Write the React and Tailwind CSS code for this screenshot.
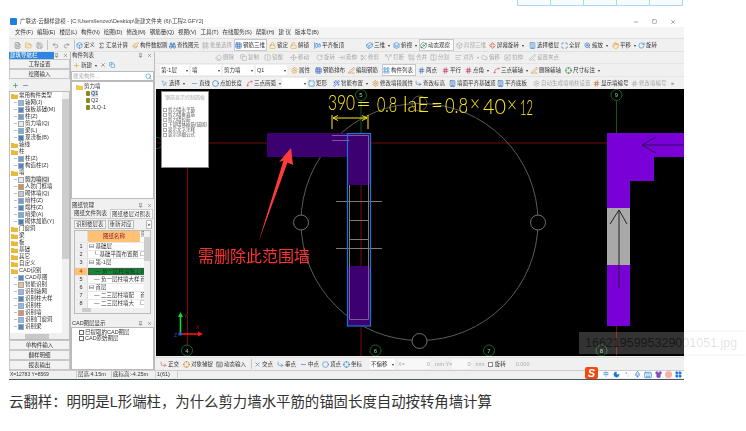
import React from "react";
import {
  Box, Sigma, Paintbrush, Binoculars, LayoutGrid, Grid3x3, Lock, Unlock, AlignHorizontalJustifyStart, Eraser, Copy, FlipHorizontal,
  Move, RotateCw, ArrowRightToLine, Scissors, Split, Combine, Columns2, AlignLeft, Cloud, Scaling, PenLine, Layers, Cuboid, Orbit,
  Rotate3d, Building, Maximize, ZoomIn, Hand, MousePointer, Minus, Circle, Spline, Square, Wand2, Settings, Hash, Crosshair, CornerDownRight,
  Search, Plus, X, FileText, FolderOpen, Save, Undo2, Redo2, Mic, Keyboard, Shirt, Moon, LayoutGrid as Grid4, Pin
} from "lucide-react";

const Tool = ({ w, I, c, t, gray, box, arrow }) => (
  <div className={`flex items-center gap-[1px] shrink-0 h-full whitespace-nowrap ${w} ${box ? "bg-white border border-[#c8c8c8]" : ""} ${gray ? "text-[#a8a8a8]" : "text-[#333]"}`}>
    {I && <I size={7} strokeWidth={2} className={`shrink-0 ${gray ? "text-[#aaa]" : c}`} />}
    <span>{t}</span>
    {arrow && <span className="ml-[2px] text-[4px]">▾</span>}
  </div>
);

const Sep = () => <div className="w-[1px] h-[10px] bg-[#c4c4c4] shrink-0" />;

const Select = ({ w, t }) => (
  <div className={`flex items-center justify-between bg-white h-[10px] shrink-0 px-[1px] ${w}`}>
    <span>{t}</span>
    <span className="text-[4px]">▾</span>
  </div>
);

const Folder = ({ open }) => (
  <svg width="7" height="6" viewBox="0 0 7 6" className="shrink-0">
    <path d="M0 1h2.5l.7.8H7V6H0z" fill={open ? "#f3c64f" : "#e8b93a"} />
  </svg>
);

const Leaf = ({ c }) => <span className={`w-[6px] h-[6px] shrink-0 border border-[#a0a8b0] ${c}`} />;

const treeRows = [
  ["f", "常用构件类型", 0], ["l", "轴网(J)", 1, "bg-[#8fb8e8]"], ["l", "筏板基础(M)", 1, "bg-[#4f87c8]"], ["l", "柱(Z)", 1, "bg-[#6d9ed8]"],
  ["l", "剪力墙(Q)", 1, "bg-[#e8e8e8]"], ["l", "梁(L)", 1, "bg-[#6db0e0]"], ["l", "现浇板(B)", 1, "bg-[#3f7fc8]"],
  ["f", "轴线", 0], ["f", "柱", 0], ["l", "柱(Z)", 1, "bg-[#6d9ed8]"], ["l", "构造柱(Z)", 1, "bg-[#4f87c8]"],
  ["f", "墙", 0], ["l", "剪力墙(Q)", 1, "bg-[#e8e8e8]", true], ["l", "人防门框墙", 1, "bg-[#d89040]"], ["l", "砌体墙(Q)", 1, "bg-[#c8c8c8]"],
  ["l", "暗柱(Z)", 1, "bg-[#6d9ed8]"], ["l", "端柱(Z)", 1, "bg-[#4f87c8]"], ["l", "暗梁(A)", 1, "bg-[#6db0e0]"], ["l", "砌体加筋(Y)", 1, "bg-[#3f7fc8]"],
  ["f", "门窗洞", 0], ["f", "梁", 0], ["f", "板", 0], ["f", "基础", 0], ["f", "其它", 0], ["f", "自定义", 0], ["f", "CAD识别", 0],
  ["l", "CAD草图", 1, "bg-[#4f87c8]"], ["l", "智能识别", 1, "bg-[#f0c080]"], ["l", "识别轴网", 1, "bg-[#8fb8e8]"], ["l", "识别柱大样", 1, "bg-[#4f87c8]"],
  ["l", "识别柱", 1, "bg-[#8fb8e8]"], ["l", "识别墙", 1, "bg-[#e09060]"], ["l", "识别门窗洞", 1, "bg-[#8fb8e8]"], ["l", "识别梁", 1, "bg-[#4f87c8]"],
];

const PanelHead = ({ t, blue }) => (
  <div className="flex items-center h-[7px] shrink-0 bg-[#f0f0f0]">
    <div className={`flex items-center h-full px-[1px] ${blue ? "bg-[#2f86e0] text-white w-[51px]" : "flex-1 text-[#333]"}`}>{t}</div>
    <div className={`flex items-center justify-end gap-[4px] pr-[2px] text-[#555] ${blue ? "flex-1" : "w-[24px]"}`}>
      <Pin size={5} />
      <X size={5} />
    </div>
  </div>
);

const SideBtn = ({ t }) => (
  <div className="h-[10px] shrink-0 flex items-center justify-center bg-[#f2f2f2] border border-[#c8c8c8] text-[#333]">{t}</div>
);

const tableRows = [
  ["1", "⊟ 基础层", "", 0, false],
  ["2", "└ 基础平面布置图", "☐", 1, false],
  ["3", "⊟ 第-1层", "", 0, false],
  ["4", "— 负一层柱墙施工", "首", 1, true],
  ["5", "— 负一层柱墙大样", "首", 1, false],
  ["6", "⊟ 首层", "", 0, false],
  ["7", "— 二三层柱墙配", "首", 1, false],
  ["8", "— 二三层柱墙大", "☐", 1, false],
];

const Canvas = () => (
  <div className="relative h-[267px] bg-black ml-[1px] overflow-hidden shrink-0">
    <svg viewBox="156 89 528 267" width="528" height="267" className="absolute left-0 top-0">
      <g fill="none" strokeWidth="1">
        <path d="M157 143H607" stroke="#7a0808" />
        <path d="M187.5 168V356" stroke="#7a0808" />
        <path d="M361 185V356" stroke="#7a0808" />
        <path d="M616.5 326V356" stroke="#7a0808" />
        <path d="M361 100V133M616.5 100V133M187 345V356M375.5 345V356M489 345V356M601.5 345V356" stroke="#0c5a1c" />
        <circle cx="419.5" cy="222" r="118.5" stroke="#5c5c5c" />
        <circle cx="301" cy="222.5" r="7.5" stroke="#707070" fill="#000" />
        <circle cx="538" cy="222.5" r="7.5" stroke="#707070" fill="#000" />
        <circle cx="419.5" cy="341" r="7.5" stroke="#707070" fill="#000" />
        <circle cx="419.5" cy="103.5" r="7.5" stroke="#555" />
        <circle cx="157" cy="143" r="5.5" stroke="#0c5a1c" />
        {[[361, 95], [616.5, 95], [187, 350.5], [375.5, 350.5], [489, 350.5], [601.5, 350.5]].map(([x, y]) => (
          <circle key={x} cx={x} cy={y} r="5.5" stroke="#0f6a22" fill="#000" />
        ))}
      </g>
      <g fontFamily="Liberation Sans, sans-serif" fontSize="6" fill="#bbb" textAnchor="middle">
        <text x="361" y="97">5</text>
        <text x="616.5" y="97">9</text>
        <text x="187" y="353">4</text>
        <text x="375.5" y="353">6</text>
        <text x="489" y="353">7</text>
        <text x="601.5" y="353">8</text>
      </g>
      <path d="M267 133H370V185H348V157H267Z" fill="#3d0070" />
      <rect x="348" y="266" width="22" height="60" fill="#3d0070" />
      <g fill="none" stroke="#7a7a7a" strokeWidth="1">
        <path d="M349.5 185V266M368.5 185V266" />
        <path d="M336 201.5H382M350 220.5H368M350 239.5H368M336 248.5H382" />
      </g>
      <g fill="none" stroke="#7b5a9c" strokeWidth="1">
        <path d="M332 135.5H368.5V185M332 140.5H349.5" />
        <path d="M349.5 266V319.5H368.5V266" />
      </g>
      <rect x="347.5" y="133.5" width="23" height="192.5" fill="none" stroke="#1b72d8" strokeWidth="1.2" />
      <path d="M607 133H684V157H654V181H630V208H607Z" fill="#7a00d8" />
      <rect x="607" y="208" width="23" height="57" fill="#a9a9a9" />
      <rect x="607" y="265" width="23" height="61" fill="#7a00d8" />
      <g fill="none" stroke="#222" strokeWidth="1">
        <path d="M619 288V210M610 224L619 210L627 224" />
        <path d="M684 145H642M656 137L642 145L656 153" stroke="#30105a" />
      </g>
      <path d="M291 148L293 165L287.5 162.5L258.5 242L283.5 160.5L279 162Z" fill="#ff3b3b" />
      <g fill="none" stroke="#ffe81a" strokeWidth="1">
        <path d="M332 115V129M368 115V129M333 118H367M333 118L338 115.5M333 118L338 120.5M367 118L362 115.5M367 118L362 120.5" />
      </g>
      <g fontFamily="Lato, Open Sans, sans-serif" fontWeight="300" fontSize="21" fill="#ffe81a">
        <text x="328" y="110" textLength="27" lengthAdjust="spacingAndGlyphs">390</text>
        <text x="356" y="111" textLength="15" lengthAdjust="spacingAndGlyphs">=</text>
        <text x="377" y="112" textLength="20" lengthAdjust="spacingAndGlyphs">0.8</text>
        <text x="403" y="112" textLength="26" lengthAdjust="spacingAndGlyphs">laE</text>
        <text x="431" y="112" textLength="12" lengthAdjust="spacingAndGlyphs">=</text>
        <text x="445" y="113" textLength="23" lengthAdjust="spacingAndGlyphs">0.8</text>
        <text x="470" y="111" textLength="10" lengthAdjust="spacingAndGlyphs">×</text>
        <text x="483" y="114" textLength="23" lengthAdjust="spacingAndGlyphs">40</text>
        <text x="507" y="112" textLength="10" lengthAdjust="spacingAndGlyphs">×</text>
        <text x="520" y="115" textLength="13" lengthAdjust="spacingAndGlyphs">12</text>
      </g>
      <g strokeWidth="1.6" fill="none">
        <path d="M180.5 334V315" stroke="#14d838" />
        <path d="M180 334H200" stroke="#ff1414" />
      </g>
      <path d="M178 317L180.5 312L183 317Z" fill="#14d838" />
      <path d="M198 331.5L203 334L198 336.5Z" fill="#ff1414" />
      <rect x="178.5" y="332.5" width="3" height="3" fill="#1c5ce8" />
      <g fontFamily="Liberation Sans, sans-serif" fontSize="5">
        <text x="184" y="318" fill="#0c7a20">Y</text>
        <text x="196" y="329" fill="#a01010">X</text>
        <text x="174" y="337" fill="#2050c0">Z</text>
      </g>
    </svg>
    <div className="absolute left-[5px] top-[2px] w-[48px] h-[77px] bg-white border border-[#888] flex flex-col text-[#555] text-[4.5px] leading-[5px]">
      <div className="text-center mt-[3px] text-[5px] text-[#aaa] whitespace-nowrap">钢筋显示控制面板</div>
      <div className="mt-[7px] ml-[1px] flex flex-col whitespace-nowrap">
        {["剪力墙水平筋", "剪力墙垂直筋", "剪力墙拉筋", "下部墙体插筋(锚固)", "显示文字注释", "显示详细公式"].map((t) => (
          <div key={t} className="flex items-center gap-[1px] h-[5px]">
            <span className="w-[4px] h-[4px] border border-[#aaa] shrink-0" />
            <span>{t}</span>
          </div>
        ))}
      </div>
    </div>
    <div className="absolute left-[42px] top-[157px] text-[16px] leading-[18px] text-[#ff3232] whitespace-nowrap font-['Noto_Sans_CJK_SC',sans-serif]">需删除此范围墙</div>
  </div>
);

export default function App() {
  return (
    <div className="relative w-[746px] h-[431px] bg-white overflow-hidden font-['Liberation_Sans','Noto_Sans_CJK_SC',sans-serif]">
      <div className="flex justify-end pr-[63px] h-[16px] items-start">
        <div className="grid grid-cols-5 w-[166px] h-[6px] bg-[#f8fcff] border-b border-[#a8d8f6] border-l">
          {[0, 1, 2, 3, 4].map((i) => <div key={i} className="border-r border-[#a8d8f6]" />)}
        </div>
      </div>

      <div className="ml-[9px] w-[675px] h-[364px] flex flex-col text-[5.5px] leading-[7px] text-[#333] bg-[#f0f0f0] border-b border-[#4a5560] blur-[0.45px]">
        <div className="h-[11px] bg-white flex items-center shrink-0">
          <div className="w-[7px] h-[7px] ml-[1px] mr-[3px] rounded-[1px] bg-[#1e7fe0] shrink-0" />
          <span className="flex-1 whitespace-nowrap text-[#444]">广联达-云翻样建模 - [C:\Users\lenovo\Desktop\新建文件夹 (6)\工程2.GFY2]</span>
          <div className="flex items-center gap-[13px] pr-[8px] text-[#555]">
            <Minus size={6} />
            <Square size={5} />
            <X size={6} />
          </div>
        </div>

        <div className="h-[11px] bg-[#f5f5f5] flex items-center gap-[4px] pl-[6px] shrink-0 whitespace-nowrap">
          {["文件(F)", "编辑(E)", "楼层(L)", "构件(N)", "绘图(D)", "修改(M)", "钢筋量(Q)", "视图(V)", "工具(T)", "在线服务(S)", "帮助(H)", "建 议", "版本号(B)"].map((m) => <span key={m}>{m}</span>)}
        </div>

        <div className="h-[14px] flex items-center pl-[5px] shrink-0 border-t border-b border-[#e0e0e0]">
          <div className="flex items-center gap-[4px] w-[62px] shrink-0 text-[#777]">
            <FileText size={7} className="text-[#777]" />
            <FolderOpen size={7} className="text-[#e0a030]" />
            <Save size={7} className="text-[#888]" />
            <Sep />
            <Undo2 size={7} />
            <Redo2 size={7} />
            <Sep />
          </div>
          <Tool w="w-[22px]" I={Box} c="text-[#2a7fd0]" t="定义" />
          <Tool w="w-[34px]" I={Sigma} c="text-[#333]" t="汇总计算" />
          <Tool w="w-[37px]" I={Paintbrush} c="text-[#d8a030]" t="构件数据刷" />
          <Tool w="w-[33px]" I={Binoculars} c="text-[#2060b0]" t="查找图元" />
          <Tool w="w-[32px]" I={LayoutGrid} c="text-[#aaa]" t="批量选择" gray />
          <Tool w="w-[33px]" I={Grid3x3} c="text-[#2a60c0]" t="钢筋三维" box />
          <Tool w="w-[21px] pl-[2px]" I={Lock} c="text-[#e0a020]" t="锁定" />
          <Tool w="w-[24px] pl-[2px]" I={Unlock} c="text-[#e0a020]" t="解锁" />
          <Tool w="w-[45px] pl-[2px]" I={AlignHorizontalJustifyStart} c="text-[#2a7fd0]" t="平齐板顶" />
          <Tool w="w-[27px] ml-[9px]" I={Cuboid} c="text-[#2a7fd0]" t="三维" arrow />
          <Tool w="w-[26px]" I={Layers} c="text-[#2a7fd0]" t="俯视" arrow />
          <Tool w="w-[35px]" I={Orbit} c="text-[#208040]" t="动态观察" box />
          <Tool w="w-[35px] pl-[2px]" I={Box} c="text-[#aaa]" t="局部三维" gray />
          <Tool w="w-[40px]" I={Rotate3d} c="text-[#d06040]" t="屏幕旋转" arrow />
          <Tool w="w-[32px]" I={Building} c="text-[#2a7fd0]" t="选择楼层" />
          <Tool w="w-[23px]" I={Maximize} c="text-[#2060b0]" t="全屏" />
          <Tool w="w-[28px]" I={ZoomIn} c="text-[#2060b0]" t="缩放" arrow />
          <Tool w="w-[26px]" I={Hand} c="text-[#e0a020]" t="平移" arrow />
          <Tool w="w-[20px]" I={RotateCw} c="text-[#2a7fd0]" t="旋转" />
        </div>

        <div className="flex h-[318px] shrink-0">
          <div className="w-[62px] flex flex-col shrink-0 border-r border-[#bbb]">
            <PanelHead t="建筑导航栏" blue />
            <SideBtn t="工程设置" />
            <SideBtn t="绘图输入" />
            <div className="h-[12px] flex items-center gap-[3px] pl-[3px] shrink-0">
              <Plus size={7} className="text-[#2a8050]" />
              <Minus size={7} className="text-[#2060b0]" />
            </div>
            <div className="h-[249px] bg-white border border-[#bbb] flex shrink-0 overflow-hidden">
              <div className="flex-1 min-w-0 flex flex-col">
                <div className="flex-1 pl-[1px] overflow-hidden">
                  {treeRows.map(([k, t, lvl, c, sel], i) => (
                    <div key={i} className={`h-[7px] flex items-center gap-[1px] whitespace-nowrap ${lvl ? "pl-[3px]" : ""}`}>
                      {lvl ? <span className="w-[3px] h-[1px] bg-[#c0c0c0] shrink-0" /> : null}
                      {k === "f" ? <Folder /> : <Leaf c={c} />}
                      <span className={sel ? "bg-[#e0e0e0]" : ""}>{t}</span>
                    </div>
                  ))}
                </div>
                <div className="h-[6px] bg-[#f0f0f0] flex items-center shrink-0">
                  <div className="ml-[15px] w-[24px] h-[5px] bg-[#c8c8c8]" />
                </div>
              </div>
              <div className="w-[7px] bg-[#f0f0f0] shrink-0 flex flex-col">
                <div className="mt-[7px] h-[160px] bg-[#cdcdcd]" />
              </div>
            </div>
            <SideBtn t="单构件输入" />
            <SideBtn t="翻样明细" />
            <SideBtn t="报表输出" />
          </div>

          <div className="w-[84px] flex flex-col shrink-0 border-r border-[#bbb]">
            <PanelHead t="构件列表" />
            <div className="h-[12px] flex items-center gap-[3px] pl-[2px] shrink-0">
              <Tool I={Plus} c="text-[#e0a020]" t="新建" arrow />
              <X size={6} className="text-[#555]" />
              <Copy size={6} className="text-[#2a7fd0]" />
            </div>
            <div className="h-[10px] flex items-center bg-white border border-[#bbb] shrink-0 text-[#aaa] pl-[1px]">
              <span className="flex-1">搜索构件...</span>
              <Search size={7} className="text-[#2a7fd0] mr-[1px]" />
            </div>
            <div className="h-[118px] bg-white border border-[#bbb] shrink-0 pt-[1px] pl-[4px] flex flex-col">
              <div className="h-[7px] flex items-center gap-[1px]"><Folder open /><span>剪力墙</span></div>
              {[["Q1", true], ["Q2", false], ["JLQ-1", false]].map(([t, s]) => (
                <div key={t} className="h-[7px] flex items-center gap-[1px] pl-[10px]">
                  <span className="w-[4px] h-[5px] bg-[#8a8a20] rounded-[1px] shrink-0" />
                  <span className={s ? "bg-[#cfe0f4]" : ""}>{t}</span>
                </div>
              ))}
            </div>
            <div className="h-[3px] shrink-0" />
            <PanelHead t="图纸管理" />
            <div className="h-[10px] flex items-end gap-[3px] pl-[3px] shrink-0 border-b border-[#ccc]">
              <span className="pb-[1px]">图纸文件列表</span>
              <span className="h-[9px] bg-white border border-[#ccc] border-b-0 px-[1px] flex items-center whitespace-nowrap">图纸楼层对照表</span>
            </div>
            <div className="h-[11px] flex items-center gap-[2px] pl-[3px] shrink-0 whitespace-nowrap">
              <span className="border border-[#bbb] px-[1px] h-[9px] flex items-center bg-[#f8f8f8]">识别楼层表</span>
              <span className="border border-[#bbb] px-[1px] h-[9px] flex items-center bg-[#f8f8f8]">重新对应</span>
              <span className="ml-auto mr-[2px] border border-[#bbb] w-[6px] h-[9px] flex items-center justify-center bg-white">»</span>
            </div>
            <div className="h-[84px] mx-[3px] bg-white border border-[#bbb] flex shrink-0 overflow-hidden">
              <div className="flex-1 min-w-0 flex flex-col">
                <div className="flex h-[11px] shrink-0">
                  <div className="w-[13px] bg-[#f0f0f0] border-r border-[#ddd]" />
                  <div className="w-[52px] bg-[#ffc174] text-[#8a1a30] flex items-center justify-center">图纸名称</div>
                  <div className="flex-1 text-[#666] pl-[1px] overflow-hidden">图</div>
                </div>
                {tableRows.map(([n, t, e, lvl, sel]) => (
                  <div key={n} className="flex h-[8.2px] shrink-0 border-t border-[#e8e8e8] whitespace-nowrap">
                    <div className={`w-[13px] flex items-center justify-center border-r border-[#ddd] ${sel ? "bg-[#ffc174] text-[#a03010]" : "bg-[#f0f0f0]"}`}>{n}</div>
                    <div className={`w-[52px] flex items-center overflow-hidden ${lvl ? "pl-[6px]" : "pl-[1px]"} ${sel ? "bg-[#0c8a34] text-[#07320f] border border-[#555]" : ""}`}>{t}</div>
                    <div className={`flex-1 overflow-hidden ${sel ? "bg-[#0c8a34]" : ""}`}>{e}</div>
                  </div>
                ))}
                <div className="flex-1 bg-[#f0f0f0] flex items-center">
                  <div className="ml-[7px] w-[9px] h-[4px] bg-[#cdcdcd]" />
                </div>
              </div>
              <div className="w-[6px] bg-[#f0f0f0] shrink-0">
                <div className="mt-[6px] h-[24px] bg-[#cdcdcd]" />
              </div>
            </div>
            <div className="h-[6px] shrink-0" />
            <PanelHead t="CAD图层显示" />
            <div className="flex-1 bg-white border border-[#bbb] pl-[7px] pt-[1px]">
              {["已提取的CAD图层", "CAD原始图层"].map((t) => (
                <div key={t} className="h-[6.5px] flex items-center gap-[1px] whitespace-nowrap">
                  <span className="w-[5px] h-[5px] border border-[#666] shrink-0" />
                  <span>{t}</span>
                </div>
              ))}
            </div>
          </div>

          <div className="flex-1 min-w-0 flex flex-col">
            <div className="h-[11px] flex items-center pl-[60px] shrink-0">
              <Tool w="w-[25px]" I={Eraser} t="删除" gray />
              <Tool w="w-[24px]" I={Copy} t="复制" gray />
              <Tool w="w-[26px]" I={FlipHorizontal} t="镜像" gray />
              <Tool w="w-[26px]" I={Move} t="移动" gray />
              <Tool w="w-[22px]" I={RotateCw} t="旋转" gray />
              <Tool w="w-[22px]" I={ArrowRightToLine} t="延伸" gray />
              <Tool w="w-[25px]" I={Scissors} t="修剪" gray />
              <Tool w="w-[23px]" I={Split} t="打断" gray />
              <Tool w="w-[22px]" I={Combine} t="合并" gray />
              <Tool w="w-[25px]" I={Columns2} t="分割" gray />
              <Tool w="w-[26px]" I={AlignLeft} t="对齐" gray arrow />
              <Tool w="w-[23px]" I={Cloud} t="偏移" gray />
              <Tool w="w-[25px]" I={Scaling} t="拉伸" gray />
              <Tool w="w-[32px]" I={PenLine} t="设置夹点" gray />
            </div>
            <div className="h-[13px] flex items-center pl-[5px] gap-[2px] shrink-0 border-t border-[#e4e4e4]">
              <Select w="w-[29px]" t="第-1层" />
              <Select w="w-[30px]" t="墙" />
              <Select w="w-[31px]" t="剪力墙" />
              <Select w="w-[31px]" t="Q1" />
              <Tool w="w-[22px] ml-[2px]" I={Settings} c="text-[#e0a020]" t="属性" />
              <Tool w="w-[31px]" I={Grid3x3} c="text-[#2a60c0]" t="钢筋排布" />
              <Tool w="w-[32px]" I={PenLine} c="text-[#d07020]" t="编辑钢筋" />
              <Tool w="w-[34px]" I={LayoutGrid} c="text-[#2a7fd0]" t="构件列表" box />
              <Tool w="w-[22px]" I={Hash} c="text-[#2a60c0]" t="两点" />
              <Tool w="w-[21px]" I={Hash} c="text-[#c02060]" t="平行" />
              <Tool w="w-[26px]" I={Hash} c="text-[#c02060]" t="点角" arrow />
              <Tool w="w-[36px]" I={Spline} c="text-[#e05050]" t="三点辅轴" arrow />
              <Tool w="w-[32px]" I={PenLine} c="text-[#d08020]" t="删除辅轴" />
              <Tool w="w-[38px]" I={Crosshair} c="text-[#208040]" t="尺寸标注" arrow />
            </div>
            <div className="h-[13px] flex items-center pl-[6px] shrink-0 border-t border-[#e4e4e4] whitespace-nowrap">
              <Tool w="w-[30px]" I={MousePointer} c="text-[#6aa0d8]" t="选择" arrow />
              <Tool w="w-[21px]" I={Minus} c="text-[#2a7fd0]" t="直线" />
              <Tool w="w-[34px]" I={Circle} c="text-[#2060b0]" t="点加长度" />
              <Tool w="w-[36px]" I={Spline} c="text-[#e05050]" t="三点画弧" arrow />
              <div className="w-[25px] h-[10px] bg-white shrink-0 flex items-center justify-end pr-[1px] text-[4px] mr-[1px]">▾</div>
              <Tool w="w-[25px]" I={Square} c="text-[#2a7fd0]" t="矩形" />
              <Tool w="w-[39px]" I={Wand2} c="text-[#2a60c0]" t="智能布置" arrow />
              <Tool w="w-[43px]" I={Settings} c="text-[#d08020]" t="修改墙段属性" />
              <Tool w="w-[34px]" I={CornerDownRight} c="text-[#2a60c0]" t="查改标高" />
              <Tool w="w-[48px]" I={Building} c="text-[#2060b0]" t="墙面平齐基础顶" />
              <Tool w="w-[36px]" I={Building} c="text-[#2060b0]" t="平齐底板" />
              <Tool w="w-[60px]" I={Settings} t="自动生成墙暗柱设置" gray />
              <Tool w="w-[38px]" I={Hash} c="text-[#c06030]" t="显示墙编号" />
              <Tool w="w-[40px]" I={Hash} t="修改墙编号" gray />
              <span className="text-[#555]">»</span>
            </div>
            <Canvas />
            <div className="flex-1 mt-[1px] flex items-center pl-[5px] border-t border-[#ddd] whitespace-nowrap">
              <Tool w="w-[23px]" I={CornerDownRight} c="text-[#d05050]" t="正交" />
              <Tool w="w-[33px]" I={Crosshair} c="text-[#d08020]" t="对象捕捉" />
              <Tool w="w-[35px]" I={Keyboard} c="text-[#555]" t="动态输入" />
              <Sep />
              <Tool w="w-[23px] ml-[2px]" I={X} c="text-[#2a7fd0]" t="交点" />
              <Tool w="w-[23px]" I={CornerDownRight} c="text-[#2a7fd0]" t="垂点" />
              <Tool w="w-[22px]" I={Minus} c="text-[#2060b0]" t="中点" />
              <Tool w="w-[21px]" I={Circle} c="text-[#2a7fd0]" t="顶点" />
              <Tool w="w-[25px]" I={Crosshair} c="text-[#2a7fd0]" t="坐标" />
              <Select w="w-[25px] ml-[2px]" t="不偏移" />
              <div className="ml-[3px] w-[32px] h-[10px] bg-[#f8f8f8] flex items-center text-[#aaa]">
                <span>X=</span><span className="ml-auto">0</span>
              </div>
              <span className="ml-[5px] text-[#aaa]">mm Y=</span>
              <div className="w-[18px] h-[10px] bg-[#f8f8f8] flex items-center justify-end text-[#aaa]">0</div>
              <span className="ml-[5px] text-[#aaa]">mm</span>
              <span className="ml-[3px] w-[5px] h-[5px] border border-[#888] bg-white" />
              <span className="ml-[2px]">旋转</span>
              <span className="ml-[10px] text-[#aaa]">0.000</span>
            </div>
          </div>
        </div>

        <div className="h-[8px] flex items-center shrink-0 border-t border-[#ccc] bg-[#f0f0f0] whitespace-nowrap">
          <span className="w-[67px] pl-[1px] text-[5px] shrink-0">X=12783 Y=8569</span>
          <span className="w-[35px] shrink-0 border-l border-[#ccc] pl-[1px]">层高:4.15m</span>
          <span className="w-[44px] shrink-0 border-l border-[#ccc] pl-[1px]">底标高:-4.25m</span>
          <span className="w-[22px] shrink-0 border-l border-[#ccc] pl-[1px]">1(61)</span>
          <span className="flex-1 border-l border-[#ccc] h-full" />
          <div className="flex items-center gap-[3px] pr-[2px] text-[#1878d8] bg-white h-full">
            <span className="w-[13px] h-[12px] bg-[#f04a14] rounded-[2px] text-white text-[11px] leading-[12px] font-bold text-center italic -mt-[4px] mr-[1px]">S</span>
            <span className="w-[8px] text-center">中</span>
            <Moon size={7} fill="#1878d8" />
            <span className="w-[8px] text-center">°,</span>
            <Mic size={7} />
            <Keyboard size={8} />
            <Shirt size={7} className="text-[#8050c0]" fill="#8050c0" />
            <span className="w-[7px] h-[7px] bg-[#f8b0a0] rounded-full" />
            <Grid4 size={7} fill="#1878d8" />
          </div>
        </div>
      </div>

      <div className="absolute left-[579px] top-[332px] w-[167px] h-[22px] bg-[rgba(255,255,255,0.2)] shadow-[0_0_3px_rgba(0,0,0,0.1)] flex items-center pl-[6px] text-[12.5px] whitespace-nowrap font-['Liberation_Sans',sans-serif]">
        <span className="text-[rgba(0,0,0,0.55)]">16621959953290</span>
        <span className="text-[rgba(0,0,0,0.13)]">01051.jpg</span>
      </div>

      <div className="ml-[9px] mt-[12px] text-[14.4px] leading-[20px] text-[#333] whitespace-nowrap font-['Liberation_Sans','Noto_Sans_CJK_SC',sans-serif]">
        云翻样：明明是L形端柱，为什么剪力墙水平筋的锚固长度自动按转角墙计算
      </div>
    </div>
  );
}
